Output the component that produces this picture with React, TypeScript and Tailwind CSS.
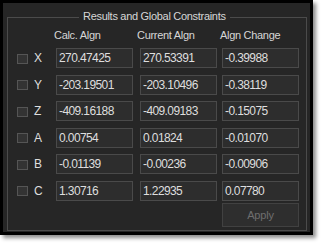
import { useState } from 'react';

interface AlignRow {
  axis: string;
  calc: string;
  current: string;
  change: string;
}

const rows: AlignRow[] = [
  { axis: 'X', calc: '270.47425', current: '270.53391', change: '-0.39988' },
  { axis: 'Y', calc: '-203.19501', current: '-203.10496', change: '-0.38119' },
  { axis: 'Z', calc: '-409.16188', current: '-409.09183', change: '-0.15075' },
  { axis: 'A', calc: '0.00754', current: '0.01824', change: '-0.01070' },
  { axis: 'B', calc: '-0.01139', current: '-0.00236', change: '-0.00906' },
  { axis: 'C', calc: '1.30716', current: '1.22935', change: '0.07780' },
];

const font = { fontFamily: '"Liberation Sans", Arial, sans-serif' };

function ValueBox({ value, className = '' }: { value: string; className?: string }) {
  return (
    <div
      className={`h-[20px] w-[77px] border border-[#4a4a4a] bg-[#2d2d2d] pl-[2px] text-[12px] leading-[18px] tracking-[-0.6px] text-[#dedede] ${className}`}
    >
      {value}
    </div>
  );
}

export default function App() {
  const [checked, setChecked] = useState<Record<string, boolean>>({});

  return (
    <div className="h-[245px] w-[321px] bg-white" style={font}>
      <div className="h-[235px] w-[313px] border-[3px] border-black bg-[#262626] shadow-[3px_3px_4px_rgba(0,0,0,0.45)]">
        <div className="ml-[4px] mr-[3px] mt-[14px] h-[214px] relative border border-[#4b4b4b]">
          <div className="absolute left-[71px] top-[-8px] bg-[#262626] px-[4px] text-[11px] leading-[13px] tracking-[-0.3px] text-[#d6d6d6]">
            Results and Global Constraints
          </div>

          <div className="flex pt-[11px] text-[11px] leading-[13px] tracking-[-0.3px] text-[#d6d6d6]">
            <span className="ml-[46px] w-[83px]">Calc. Algn</span>
            <span className="w-[83px]">Current Algn</span>
            <span>Algn Change</span>
          </div>

          <div className="mt-[6px] flex flex-col gap-[6.6px]">
            {rows.map((row) => (
              <div key={row.axis} className="flex h-[20px] items-center">
                <button
                  type="button"
                  onClick={() => setChecked((c) => ({ ...c, [row.axis]: !c[row.axis] }))}
                  className="ml-[9px] mt-[1px] h-[10px] w-[11px] border border-[#555555] bg-[#333333]"
                  aria-label={`Select ${row.axis}`}
                >
                  {checked[row.axis] ? <span className="block h-full w-full bg-[#888]" /> : null}
                </button>
                <span className="ml-[6px] w-[22px] text-[12px] leading-[14px] text-[#dedede]">
                  {row.axis}
                </span>
                <ValueBox value={row.calc} />
                <ValueBox value={row.current} className="ml-[7px] w-[76px]" />
                <ValueBox value={row.change} className="ml-[5px]" />
              </div>
            ))}
          </div>

          <div className="mt-[2px] flex justify-end pr-[7px]">
            <button
              type="button"
              disabled
              className="h-[24px] w-[77px] border border-[#414141] bg-[#2e2e2e] text-[11px] tracking-[-0.2px] text-[#6e6e6e]"
            >
              Apply
            </button>
          </div>
        </div>
      </div>
    </div>
  );
}
